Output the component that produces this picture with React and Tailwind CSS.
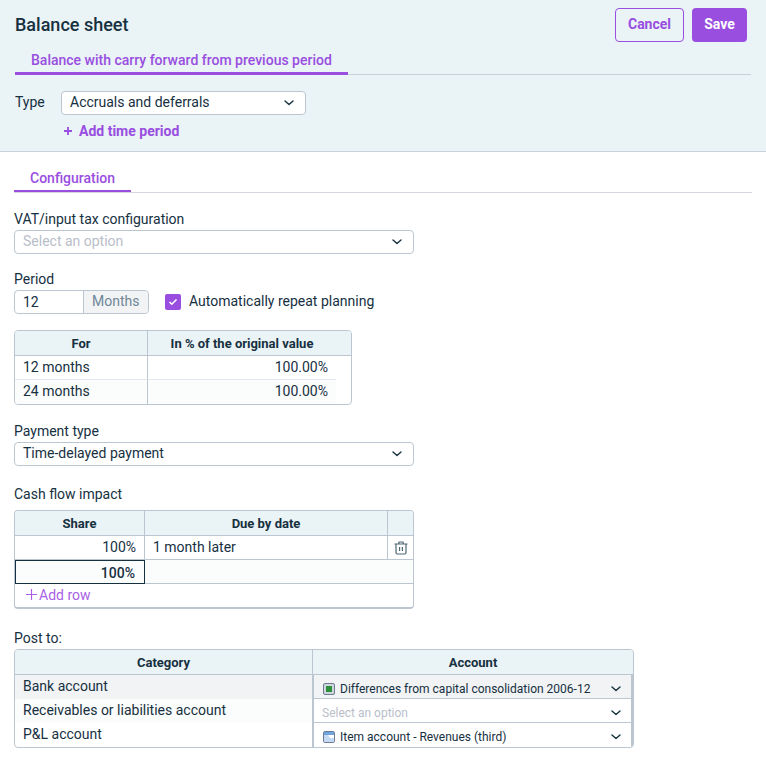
import React from 'react';

const Chevron = ({ className = '' }) => (
  <svg width="10" height="6" viewBox="0 0 10 6" fill="none" className={className}>
    <path d="M1 1l4 3.6L9 1" stroke="#16303f" strokeWidth="1.4" strokeLinecap="round" strokeLinejoin="round" />
  </svg>
);

const Select = ({ text, muted, className = '' }) => (
  <div className={`flex h-6 items-center justify-between rounded border border-[#bcc6d0] bg-white pl-2 pr-[11px] ${className}`}>
    <span className={`pb-[2px] ${muted ? 'text-[#b9bec9]' : 'text-[#16303f]'}`}>{text}</span>
    <Chevron />
  </div>
);

const Trash = () => (
  <svg width="14" height="14" viewBox="0 0 14 14" fill="none" stroke="#4f6675" strokeWidth="1.2">
    <path d="M0.5 3h13M2 3v8.8c0 .7.5 1.2 1.2 1.2h7.6c.7 0 1.2-.5 1.2-1.2V3M4.8 3V1.6c0-.4.3-.6.6-.6h3.2c.3 0 .6.2.6.6V3M5.6 6v4M8.4 6v4" />
  </svg>
);

const AccountIcon = ({ kind }) => (
  <svg width="12" height="12" viewBox="0 0 12 12" className="ml-px mr-[5px] shrink-0">
    <rect x="0.5" y="0.5" width="11" height="11" rx="1.5" fill={kind === 'green' ? '#cfd6de' : '#ffffff'} stroke="#6f7a96" />
    {kind === 'green' ? (
      <rect x="3" y="3" width="6" height="6" fill="#2c8f3a" />
    ) : (
      <>
        <rect x="1" y="1" width="10" height="3" fill="#6fa5dc" />
        <path d="M1 4h4l2 3h4v4H1z" fill="#c4daf2" />
      </>
    )}
  </svg>
);

const Th = ({ children, className = '' }) => (
  <div className={`flex h-[25px] items-center justify-center border-b border-[#bcc6d0] bg-[#eaf3f6] pt-[2px] text-[13px] font-bold text-[#16303f] ${className}`}>
    {children}
  </div>
);

const AccountRow = ({ icon, text, muted, bg = 'bg-white', last }) => (
  <div className={`flex h-6 items-center justify-between pl-2 pr-[10px] pt-[4px] ${bg} ${last ? '' : 'border-b border-[#bcc6d0]'}`}>
    <span className={`flex items-center text-[12px] ${muted ? 'text-[#b9bec9]' : 'text-[#16303f]'}`}>
      {icon && <AccountIcon kind={icon} />}
      {text}
    </span>
    <Chevron />
  </div>
);

export default function App() {
  return (
    <div className="h-[767px] w-[766px] overflow-hidden bg-white font-['Roboto',sans-serif] text-[14px] leading-[20px] text-[#16303f]">
      <header className="h-[152px] border-b border-[#c9d1da] bg-[#eaf3f6] pl-[15px] pr-[15px]">
        <div className="flex h-[50px] items-start justify-between pt-2 pr-1">
          <h1 className="mt-1 text-[18px] font-medium leading-[26px]">Balance sheet</h1>
          <div className="flex gap-2">
            <button className="h-[34px] w-[69px] rounded border border-[#994ee0] bg-transparent pb-[2px] text-[14px] font-bold text-[#994ee0]">Cancel</button>
            <button className="h-[34px] w-[55px] rounded bg-[#994ee0] pb-[2px] text-[14px] font-bold text-white">Save</button>
          </div>
        </div>
        <div className="h-[25px] border-b border-[#c9d1da]">
          <div className="h-[25px] w-[333px] border-b-[3px] border-[#994ee0] pl-4 text-[14px] font-medium leading-[20px] text-[#994ee0]">
            Balance with carry forward from previous period
          </div>
        </div>
        <div className="mt-4 flex items-center">
          <span className="w-[46px] pb-[2px]">Type</span>
          <Select text="Accruals and deferrals" className="w-[245px]" />
        </div>
        <div className="ml-[48px] mt-[6px] flex items-center pl-px text-[14px] font-bold text-[#994ee0]">
          <svg width="8" height="8" viewBox="0 0 8 8" className="mr-[7px]"><path d="M4 0v8M0 4h8" stroke="#994ee0" strokeWidth="1.8" /></svg>
          Add time period
        </div>
      </header>

      <main className="pl-[14px] pr-[14px]">
        <div className="mt-4 h-[25px] border-b border-[#d3d6e2]">
          <div className="h-[24px] w-[117px] border-b-[2px] border-[#994ee0] pl-4 font-medium text-[#994ee0]">Configuration</div>
        </div>

        <label className="mt-4 block h-[21px]">VAT/input tax configuration</label>
        <Select text="Select an option" muted className="w-[400px]" />

        <label className="mt-[15px] block h-[21px]">Period</label>
        <div className="flex items-center">
          <div className="flex h-6 w-[135px] rounded border border-[#bcc6d0] bg-white">
            <span className="flex w-[69px] items-center border-r border-[#bcc6d0] pb-px pl-2">12</span>
            <span className="flex flex-1 items-center rounded-r bg-[#f1f3f5] pb-[2px] pl-2 text-[#6f8797]">Months</span>
          </div>
          <div className="ml-4 flex h-4 w-4 items-center justify-center rounded-[2px] bg-[#994ee0]">
            <svg width="10" height="8" viewBox="0 0 10 8" fill="none"><path d="M1.5 4l2.3 2.2L8.5 1.5" stroke="#fff" strokeWidth="1.6" /></svg>
          </div>
          <span className="ml-2 pb-[2px]">Automatically repeat planning</span>
        </div>

        <div className="mt-4 w-[338px] overflow-hidden rounded border border-[#bcc6d0]">
          <div className="grid grid-cols-[133px_188px_1fr]">
            <Th className="border-r">For</Th>
            <Th>In % of the original value</Th>
            <Th />
            <div className="flex h-6 items-center border-b border-r border-b-[#e3e8ee] border-r-[#bcc6d0] pb-[2px] pl-2">12 months</div>
            <div className="flex h-6 items-center justify-end border-b border-[#e3e8ee] pb-[2px] pr-2">100.00%</div>
            <div />
            <div className="flex h-6 items-center border-r border-[#bcc6d0] bg-[#fbfcfc] pb-[2px] pl-2">24 months</div>
            <div className="flex h-6 items-center justify-end bg-[#fbfcfc] pb-[2px] pr-2">100.00%</div>
            <div />
          </div>
        </div>

        <label className="mt-4 block h-[21px]">Payment type</label>
        <Select text="Time-delayed payment" className="w-[400px]" />

        <label className="mt-[18px] block h-[26px]">Cash flow impact</label>
        <div className="w-[400px] overflow-hidden rounded border border-b-2 border-[#bcc6d0]">
          <div className="grid grid-cols-[130px_243px_1fr]">
            <Th className="border-r">Share</Th>
            <Th className="border-r">Due by date</Th>
            <Th />
            <div className="flex h-6 items-center justify-end border-b border-r border-[#bcc6d0] pb-px pr-2">100%</div>
            <div className="flex h-6 items-center border-b border-r border-[#bcc6d0] pb-px pl-2">1 month later</div>
            <div className="flex h-6 items-center justify-center border-b border-[#bcc6d0]"><Trash /></div>
            <div className="flex h-6 items-center justify-end border-b border-[#bcc6d0] bg-[#fbfcfc]">
              <div className="flex h-[24px] w-full items-center justify-end border border-[#16303f] pr-[9px] pt-[2px] font-medium">100%</div>
            </div>
            <div className="col-span-2 h-6 border-b border-[#bcc6d0] bg-[#fbfcfc]" />
            <div className="col-span-3 flex h-[23px] items-center pb-[2px] pl-[11px] text-[#aa5fe4]">
              <svg width="11" height="11" viewBox="0 0 11 11" className="mr-[2px]"><path d="M5.5 0v11M0 5.5h11" stroke="#aa5fe4" strokeWidth="1.2" /></svg>
              Add row
            </div>
          </div>
        </div>

        <label className="mt-[19px] block h-[21px]">Post to:</label>
        <div className="w-[620px] overflow-hidden rounded border border-[#bcc6d0]">
          <div className="grid grid-cols-[298px_1fr]">
            <Th className="border-r">Category</Th>
            <Th>Account</Th>
            <div className="border-r border-[#bcc6d0]">
              <div className="flex h-6 items-center bg-[#f1f3f5] pb-[2px] pl-2">Bank account</div>
              <div className="flex h-6 items-center bg-[#fbfcfc] pb-[2px] pl-2">Receivables or liabilities account</div>
              <div className="flex h-6 items-center pb-[2px] pl-2">P&amp;L account</div>
            </div>
            <div className="border-l border-r-2 border-[#bcc6d0]">
              <AccountRow icon="green" text="Differences from capital consolidation 2006-12" bg="bg-[#f1f3f5]" />
              <AccountRow text="Select an option" muted />
              <AccountRow icon="blue" text="Item account - Revenues (third)" last />
            </div>
          </div>
        </div>
      </main>
    </div>
  );
}
